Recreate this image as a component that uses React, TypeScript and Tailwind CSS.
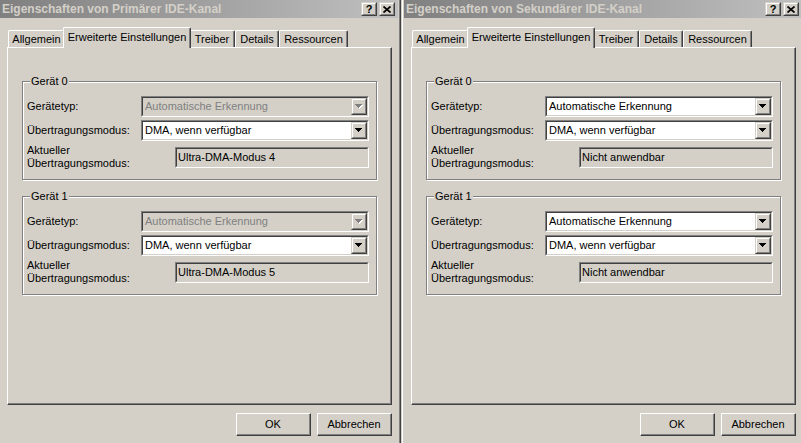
import React from 'react';

// Eigenschaften-Dialoge (Windows Classic) für die beiden IDE-Kanäle
interface Device {
    name: string;
    typ: string;
    typDisabled: boolean;
    modus: string;
    aktuell: string;
}

interface DialogProps {
    title: string;
    devices: Device[];
}

const tabs = [
    { label: 'Allgemein', cls: 'w-[57px]' },
    { label: 'Erweiterte Einstellungen', cls: 'w-[128px] -mx-[2px]', active: true },
    { label: 'Treiber', cls: 'w-[46px]' },
    { label: 'Details', cls: 'w-[44px]' },
    { label: 'Ressourcen', cls: 'w-[69px]' },
];

const Arrow = ({ disabled }: { disabled?: boolean }) => (
    <svg width="8" height="5" viewBox="0 0 8 5" className="block">
        {disabled && <path d="M1 1h7v1h-1v1h-1v1h-1v1h-1v-1h-1v-1h-1v-1h-1z" fill="#ffffff" />}
        <path
            d="M0 0h7v1h-1v1h-1v1h-1v1h-1v-1h-1v-1h-1v-1h-1z"
            fill={disabled ? '#808080' : '#000000'}
        />
    </svg>
);

// erhabener Rahmen (Schaltflächen)
const Raised = ({ className, children }: { className: string; children: React.ReactNode }) => (
    <div className={`border border-t-[#d4d0c8] border-l-[#d4d0c8] border-r-[#404040] border-b-[#404040] bg-[#d4d0c8] ${className}`}>
        <div className="flex h-full w-full items-center justify-center border border-t-white border-l-white border-r-[#808080] border-b-[#808080]">
            {children}
        </div>
    </div>
);

const Combo = ({ value, disabled }: { value: string; disabled?: boolean }) => (
    <div className="h-[21px] w-[228px] border border-t-[#808080] border-l-[#808080] border-r-white border-b-white">
        <div
            className={`flex h-full border border-t-[#404040] border-l-[#404040] border-r-[#d4d0c8] border-b-[#d4d0c8] ${
                disabled ? 'bg-[#d4d0c8]' : 'bg-white'
            }`}
        >
            <span className={`flex-1 pl-[2px] leading-[17px] ${disabled ? 'text-[#808080]' : 'text-black'}`}>
                {value}
            </span>
            <Raised className="h-[17px] w-[16px]">
                <Arrow disabled={disabled} />
            </Raised>
        </div>
    </div>
);

const ReadOnly = ({ value }: { value: string }) => (
    <div className="h-[21px] w-[194px] border border-t-[#808080] border-l-[#808080] border-r-white border-b-white">
        <div className="h-full border border-t-[#404040] border-l-[#404040] border-r-[#d4d0c8] border-b-[#d4d0c8] bg-[#d4d0c8] pl-[1px] leading-[17px]">
            {value}
        </div>
    </div>
);

const GroupBox = ({ device }: { device: Device }) => (
    <div className="relative ml-[14px] h-[99px] w-[355px] border border-[#808080] shadow-[inset_1px_1px_0_#ffffff,1px_1px_0_#ffffff]">
        <span className="absolute -top-[7px] left-[7px] bg-[#d4d0c8] px-[1px] leading-[13px]">{device.name}</span>
        <div className="flex flex-col pl-[4px] pt-[14px]">
            <div className="flex h-[21px] items-center">
                <span className="w-[114px]">Gerätetyp:</span>
                <Combo value={device.typ} disabled={device.typDisabled} />
            </div>
            <div className="mt-[3px] flex h-[21px] items-center">
                <span className="w-[114px]">Übertragungsmodus:</span>
                <Combo value={device.modus} />
            </div>
            <div className="mt-[3px] flex h-[26px] items-center">
                <span className="w-[148px] leading-[13px]">
                    Aktueller
                    <br />
                    Übertragungsmodus:
                </span>
                <ReadOnly value={device.aktuell} />
            </div>
        </div>
    </div>
);

const Dialog = ({ title, devices }: DialogProps) => (
    <div className="h-[460px] w-[404px] shrink-0 border border-t-[#d4d0c8] border-l-[#d4d0c8] border-r-[#404040] border-b-[#404040]">
        <div className="h-full border border-t-white border-l-white border-r-[#808080] border-b-[#808080] p-[1px]">
            {/* Titelleiste (inaktiv) */}
            <div className="flex h-[18px] items-center bg-gradient-to-r from-[#808080] to-[#c0c0c0] pl-[2px] pr-[3px]">
                <span className="flex-1 truncate text-[12px] font-bold text-[#d4d0c8]">{title}</span>
                <div className="flex gap-[2px]">
                    <Raised className="h-[14px] w-[16px]">
                        <span className="text-[11px] font-bold leading-none text-black">?</span>
                    </Raised>
                    <Raised className="h-[14px] w-[16px]">
                        <svg width="8" height="7" viewBox="0 0 8 7" className="block">
                            <path d="M0.5 0.5L7.5 6.5M7.5 0.5L0.5 6.5" stroke="#000" strokeWidth="1.7" />
                        </svg>
                    </Raised>
                </div>
            </div>

            {/* Registerkarten */}
            <div className="relative z-10 ml-[8px] mt-[9px] flex h-[20px] items-end">
                {tabs.map(t => (
                    <div
                        key={t.label}
                        className={`${t.cls} rounded-t-[2px] border-l border-t border-r border-l-white border-t-white border-r-[#404040] bg-[#d4d0c8] text-center shadow-[inset_-1px_0_0_#808080] ${
                            t.active ? 'relative z-10 -mb-[1px] h-[21px] pt-[2px] leading-[14px]' : 'h-[17px] pt-[2px] leading-[13px]'
                        }`}
                    >
                        {t.label}
                    </div>
                ))}
            </div>

            <div className="ml-[7px] h-[358px] w-[385px] border border-t-white border-l-white border-r-[#404040] border-b-[#404040]">
                <div className="h-full border-r border-b border-[#808080] pt-[33px]">
                    <GroupBox device={devices[0]} />
                    <div className="h-[16px]" />
                    <GroupBox device={devices[1]} />
                </div>
            </div>

            <div className="mt-[8px] flex justify-end gap-[6px] pr-[6px]">
                <div className="h-[23px] w-[75px] border border-t-white border-l-white border-r-[#404040] border-b-[#404040]">
                    <div className="flex h-full items-center justify-center border-r border-b border-[#808080]">OK</div>
                </div>
                <div className="h-[23px] w-[75px] border border-t-white border-l-white border-r-[#404040] border-b-[#404040]">
                    <div className="flex h-full items-center justify-center border-r border-b border-[#808080]">Abbrechen</div>
                </div>
            </div>
        </div>
    </div>
);

const primaer: Device[] = [
    { name: 'Gerät 0', typ: 'Automatische Erkennung', typDisabled: true, modus: 'DMA, wenn verfügbar', aktuell: 'Ultra-DMA-Modus 4' },
    { name: 'Gerät 1', typ: 'Automatische Erkennung', typDisabled: true, modus: 'DMA, wenn verfügbar', aktuell: 'Ultra-DMA-Modus 5' },
];

const sekundaer: Device[] = [
    { name: 'Gerät 0', typ: 'Automatische Erkennung', typDisabled: false, modus: 'DMA, wenn verfügbar', aktuell: 'Nicht anwendbar' },
    { name: 'Gerät 1', typ: 'Automatische Erkennung', typDisabled: false, modus: 'DMA, wenn verfügbar', aktuell: 'Nicht anwendbar' },
];

export default function App() {
    return (
        <div className="h-[443px] w-[801px] overflow-hidden bg-[#d4d0c8] font-['Liberation_Sans',Arial,sans-serif] text-[11px] text-black">
            <div className="-ml-[3px] -mt-[3px] flex">
                <Dialog title="Eigenschaften von Primärer IDE-Kanal" devices={primaer} />
                <Dialog title="Eigenschaften von Sekundärer IDE-Kanal" devices={sekundaer} />
            </div>
        </div>
    );
}
